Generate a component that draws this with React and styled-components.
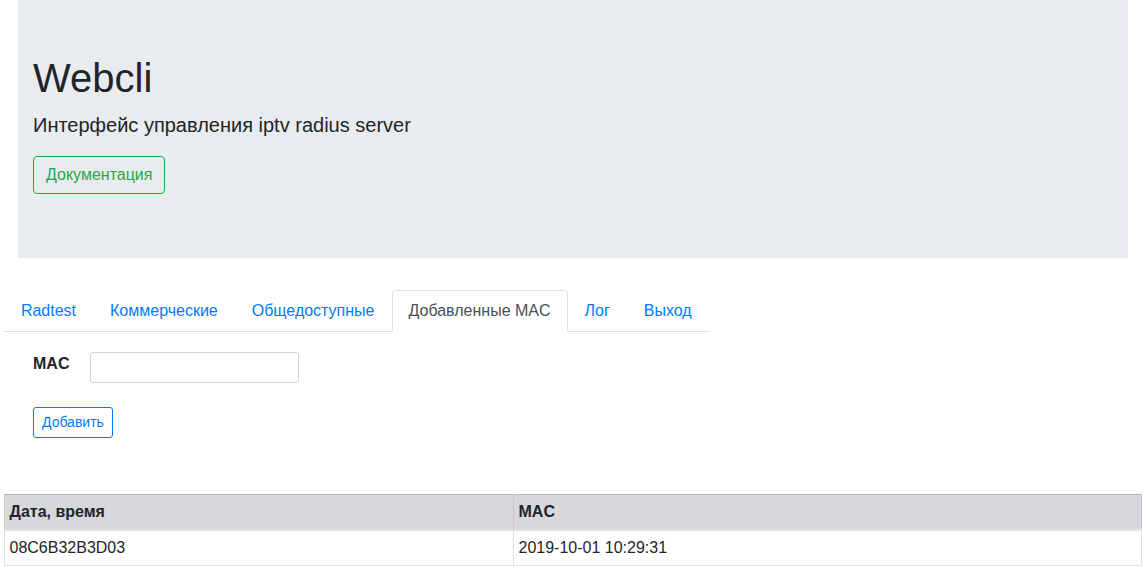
import styled, { createGlobalStyle } from 'styled-components';

const GlobalStyle = createGlobalStyle`
    body {
        margin: 0;
        font-family: "Liberation Sans", Arial, sans-serif;
        font-size: 16px;
        line-height: 1.5;
        color: #212529;
        background: #fff;
    }
`;

const Page = styled.div`
    padding: 0 6px 0 4px;
`;

const Jumbotron = styled.header`
    margin: 0 14px 32px 14px;
    padding: 54px 15px 64px;
    background-color: #e9ecef;
`;

const Title = styled.h1`
    margin: 0 0 8px;
    font-size: 40px;
    font-weight: 400;
    line-height: 1.2;
`;

const Lead = styled.p`
    margin: 0 0 16px;
    font-size: 20px;
    line-height: 1.5;
`;

const Button = styled.a`
    display: inline-block;
    font-size: ${({small}) => small ? '14px' : '16px'};
    line-height: ${({small}) => small ? '21px' : '24px'};
    padding: ${({small}) => small ? '4px 8px' : '6px 12px'};
    border: 1px solid ${({color}) => color};
    border-radius: ${({small}) => small ? '3px' : '4px'};
    color: ${({color}) => color};
    background: transparent;
    text-decoration: none;
    cursor: pointer;
`;

const Tabs = styled.ul`
    display: flex;
    width: fit-content;
    margin: 0;
    padding: 0;
    list-style: none;
    border-bottom: 1px solid #dee2e6;
`;

const Tab = styled.li`
    margin-bottom: -1px;
`;

const TabLink = styled.a`
    display: block;
    padding: 8px 16.1px 8px 15.9px;
    line-height: 24px;
    border: 1px solid transparent;
    border-color: ${({$active}) => $active ? '#dee2e6 #dee2e6 #fff' : 'transparent'};
    border-top-left-radius: 4px;
    border-top-right-radius: 4px;
    background: ${({$active}) => $active ? '#fff' : 'transparent'};
    color: ${({$active}) => $active ? '#495057' : '#007bff'};
    text-decoration: none;
`;

const Form = styled.form`
    margin: 20px 0 0 29px;
`;

const FieldRow = styled.div`
    display: flex;
    align-items: flex-start;
    margin-bottom: 24px;
`;

const Label = styled.label`
    width: 57px;
    line-height: 24px;
    font-weight: 700;
`;

const Input = styled.input`
    box-sizing: border-box;
    width: 209px;
    height: 31px;
    padding: 4px 8px;
    font-family: inherit;
    font-size: 14px;
    border: 1px solid #ced4da;
    border-radius: 3px;
    outline: none;
`;

const Table = styled.table`
    width: 100%;
    margin-top: 56px;
    border-collapse: collapse;
    table-layout: fixed;
`;

const HeadCell = styled.th`
    padding: 5px 4px 5px 4.5px;
    text-align: left;
    font-weight: 700;
    background: #d6d8db;
    border: 1px solid #c6c8cb;
    border-top-color: #b3b7bb;
    border-bottom: 2px solid #dee2e6;
`;

const Cell = styled.td`
    padding: 5px 4px 5px 4.5px;
    border: 1px solid #dee2e6;
`;

const tabs = ['Radtest', 'Коммерческие', 'Общедоступные', 'Добавленные MAC', 'Лог', 'Выход'];

export default function App() {
    return <Page>
        <GlobalStyle />
        <Jumbotron>
            <Title>Webcli</Title>
            <Lead>Интерфейс управления iptv radius server</Lead>
            <Button color="#28a745">Документация</Button>
        </Jumbotron>

        <Tabs>
            {tabs.map(t => <Tab key={t}>
                <TabLink $active={t === 'Добавленные MAC'}>{t}</TabLink>
            </Tab>)}
        </Tabs>

        <Form onSubmit={e => e.preventDefault()}>
            <FieldRow>
                <Label htmlFor="mac">MAC</Label>
                <Input id="mac" type="text" />
            </FieldRow>
            <Button small color="#007bff">Добавить</Button>
        </Form>

        <Table>
            <colgroup>
                <col style={{width: '509px'}} />
                <col />
            </colgroup>
            <thead>
                <tr>
                    <HeadCell>Дата, время</HeadCell>
                    <HeadCell>MAC</HeadCell>
                </tr>
            </thead>
            <tbody>
                <tr>
                    <Cell>08C6B32B3D03</Cell>
                    <Cell>2019-10-01 10:29:31</Cell>
                </tr>
            </tbody>
        </Table>
    </Page>
}
